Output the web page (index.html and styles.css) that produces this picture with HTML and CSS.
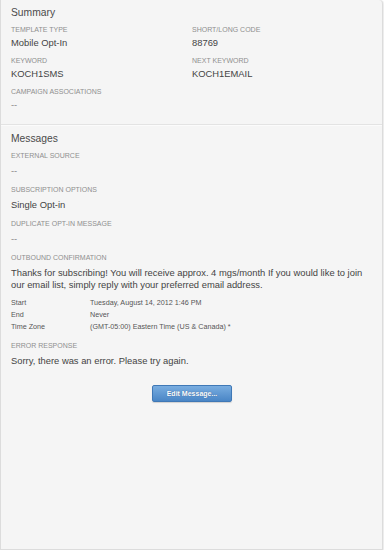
FILE: index.html
```
<!DOCTYPE html>
<html>
<head>
    <link rel="stylesheet" href="styles.css">
</head>
<body>
    <div class="panel">
        <div class="section summary">
            <h2 class="section-title">Summary</h2>
            <div class="field-grid">
                <div class="field">
                    <div class="field-label">Template Type</div>
                    <div class="field-value">Mobile Opt-In</div>
                </div>
                <div class="field">
                    <div class="field-label">Short/Long Code</div>
                    <div class="field-value">88769</div>
                </div>
                <div class="field">
                    <div class="field-label">Keyword</div>
                    <div class="field-value">KOCH1SMS</div>
                </div>
                <div class="field">
                    <div class="field-label">Next Keyword</div>
                    <div class="field-value">KOCH1EMAIL</div>
                </div>
                <div class="field">
                    <div class="field-label">Campaign Associations</div>
                    <div class="field-value empty">--</div>
                </div>
            </div>
        </div>

        <div class="section messages">
            <h2 class="section-title">Messages</h2>
            <div class="field">
                <div class="field-label">External Source</div>
                <div class="field-value empty">--</div>
            </div>
            <div class="field">
                <div class="field-label">Subscription Options</div>
                <div class="field-value">Single Opt-in</div>
            </div>
            <div class="field">
                <div class="field-label">Duplicate Opt-In Message</div>
                <div class="field-value empty">--</div>
            </div>
            <div class="field">
                <div class="field-label">Outbound Confirmation</div>
                <div class="field-value">Thanks for subscribing! You will receive approx. 4 mgs/month If you would like to join our email list, simply reply with your preferred email address.</div>
                <div class="schedule">
                    <div class="schedule-row"><span class="schedule-key">Start</span><span>Tuesday, August 14, 2012 1:46 PM</span></div>
                    <div class="schedule-row"><span class="schedule-key">End</span><span>Never</span></div>
                    <div class="schedule-row"><span class="schedule-key">Time Zone</span><span>(GMT-05:00) Eastern Time (US &amp; Canada) *</span></div>
                </div>
            </div>
            <div class="field">
                <div class="field-label">Error Response</div>
                <div class="field-value">Sorry, there was an error. Please try again.</div>
            </div>
            <div class="actions">
                <button class="edit-button">Edit Message...</button>
            </div>
        </div>
    </div>
</body>
</html>
```

FILE: styles.css
```
body {
    margin: 0;
    background-color: #fff;
    font-family: "Liberation Sans", Arial, sans-serif;
}

.panel {
    width: 383px;
    min-height: 550px;
    box-sizing: border-box;
    background-color: #f5f5f5;
    border: 1px solid #dcdcdc;
    border-top: none;
    border-radius: 0 4px 0 0;
    box-shadow: 1px 0 1px rgba(0, 0, 0, 0.08);
}

.section {
    padding: 0 10px;
}

.summary {
    padding-top: 6px;
    padding-bottom: 6px;
    border-bottom: 1px solid #e3e3e3;
}

.messages {
    padding-top: 6px;
    padding-right: 15px;
    border-top: 1px solid #fbfbfb;
}

.section-title {
    margin: 0 0 5px;
    font-size: 10.3px;
    line-height: 14px;
    font-weight: normal;
    color: #4a4a4a;
}

.field-grid {
    display: grid;
    grid-template-columns: 181px 1fr;
}

.field {
    margin-bottom: 7px;
}

.messages .field {
    margin-bottom: 8px;
}

.field-label {
    font-size: 7px;
    line-height: 10px;
    text-transform: uppercase;
    color: #8f8f8f;
    margin-bottom: 2px;
}

.messages .field-label {
    margin-bottom: 4px;
}

.field-value {
    font-size: 9.4px;
    line-height: 12px;
    color: #444;
}

.field-value.empty {
    color: #888;
}

.schedule {
    margin-top: 6px;
    font-size: 7.2px;
    line-height: 12px;
    color: #555;
}

.schedule-key {
    display: inline-block;
    width: 79px;
}

.actions {
    display: flex;
    justify-content: center;
    padding-top: 10px;
    padding-left: 6px;
}

.edit-button {
    width: 80px;
    height: 17px;
    padding: 0;
    font-family: "Liberation Sans", Arial, sans-serif;
    font-size: 7px;
    font-weight: bold;
    color: #fff;
    text-shadow: 0 0 1px rgba(0, 40, 90, 0.6);
    background: linear-gradient(#79ade0, #4a86c6);
    border: 1px solid #3f78b6;
    border-radius: 2px;
    box-shadow: 0 1px 1px rgba(0, 0, 0, 0.15);
    cursor: pointer;
}
```
